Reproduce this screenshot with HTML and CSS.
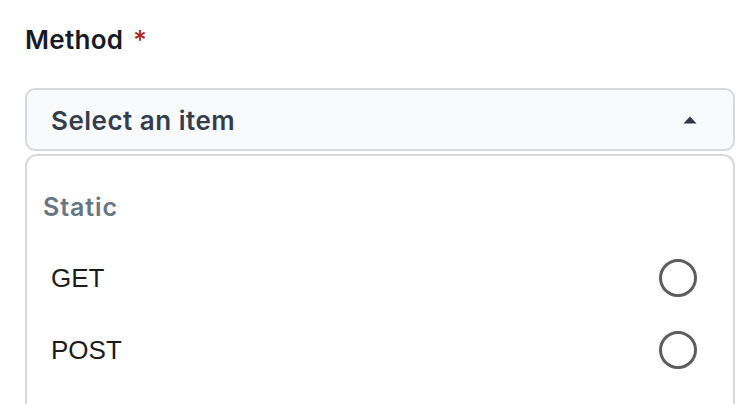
FILE: index.html
```html
<!DOCTYPE html>
<html lang="en">
<head>
<meta charset="utf-8">
<link rel="stylesheet" href="styles.css">
</head>
<body>
<div class="field">
  <div class="label">Method <span class="req">*</span></div>
  <div class="select">
    <span class="placeholder">Select an item</span>
    <svg class="caret" width="14" height="8" viewBox="0 0 14 8"><path d="M7 0.5 L13.5 7.5 L0.5 7.5 Z" fill="#2d3748"/></svg>
  </div>
  <div class="panel">
    <div class="group">Static</div>
    <div class="item"><span>GET</span><span class="radio"></span></div>
    <div class="item"><span>POST</span><span class="radio"></span></div>
  </div>
</div>
</body>
</html>
```
FILE: styles.css
```css
html, body {
  margin: 0;
  padding: 0;
  background: #ffffff;
  width: 748px;
  height: 404px;
  overflow: hidden;
}
.field {
  padding: 22px 13px 0 25px;
  font-family: Inter, "Liberation Sans", sans-serif;
}
.label {
  height: 36px;
  line-height: 36px;
  font-size: 26px;
  font-weight: 600;
  letter-spacing: 0.3px;
  color: #161b26;
  margin-bottom: 30px;
}
.req {
  color: #b42318;
  font-weight: 500;
  margin-left: 3px;
}
.select {
  box-sizing: border-box;
  height: 63px;
  border: 2px solid #d6d8dc;
  border-radius: 10px;
  background: #f9fafb;
  display: flex;
  align-items: center;
  justify-content: space-between;
  padding: 1px 36px 0 24px;
}
.placeholder {
  font-size: 26px;
  font-weight: 600;
  letter-spacing: 0.5px;
  color: #323d4e;
}
.caret {
  display: block;
}
.panel {
  margin-top: 3px;
  border: 2px solid #d6d8dc;
  border-bottom: none;
  border-radius: 12px 12px 0 0;
  height: 260px;
  padding-top: 33px;
  box-sizing: border-box;
}
.group {
  height: 36px;
  line-height: 36px;
  padding-left: 16px;
  font-size: 25px;
  font-weight: 600;
  letter-spacing: 0.9px;
  color: #687583;
  margin-bottom: 17px;
}
.item {
  height: 72px;
  display: flex;
  align-items: center;
  justify-content: space-between;
  padding: 0 36px 0 24px;
  font-family: "Liberation Sans", Arial, sans-serif;
  font-size: 26px;
  color: #1c1c1c;
}
.radio {
  box-sizing: border-box;
  width: 38px;
  height: 38px;
  border: 3px solid #5e5e5e;
  border-radius: 50%;
}
```
